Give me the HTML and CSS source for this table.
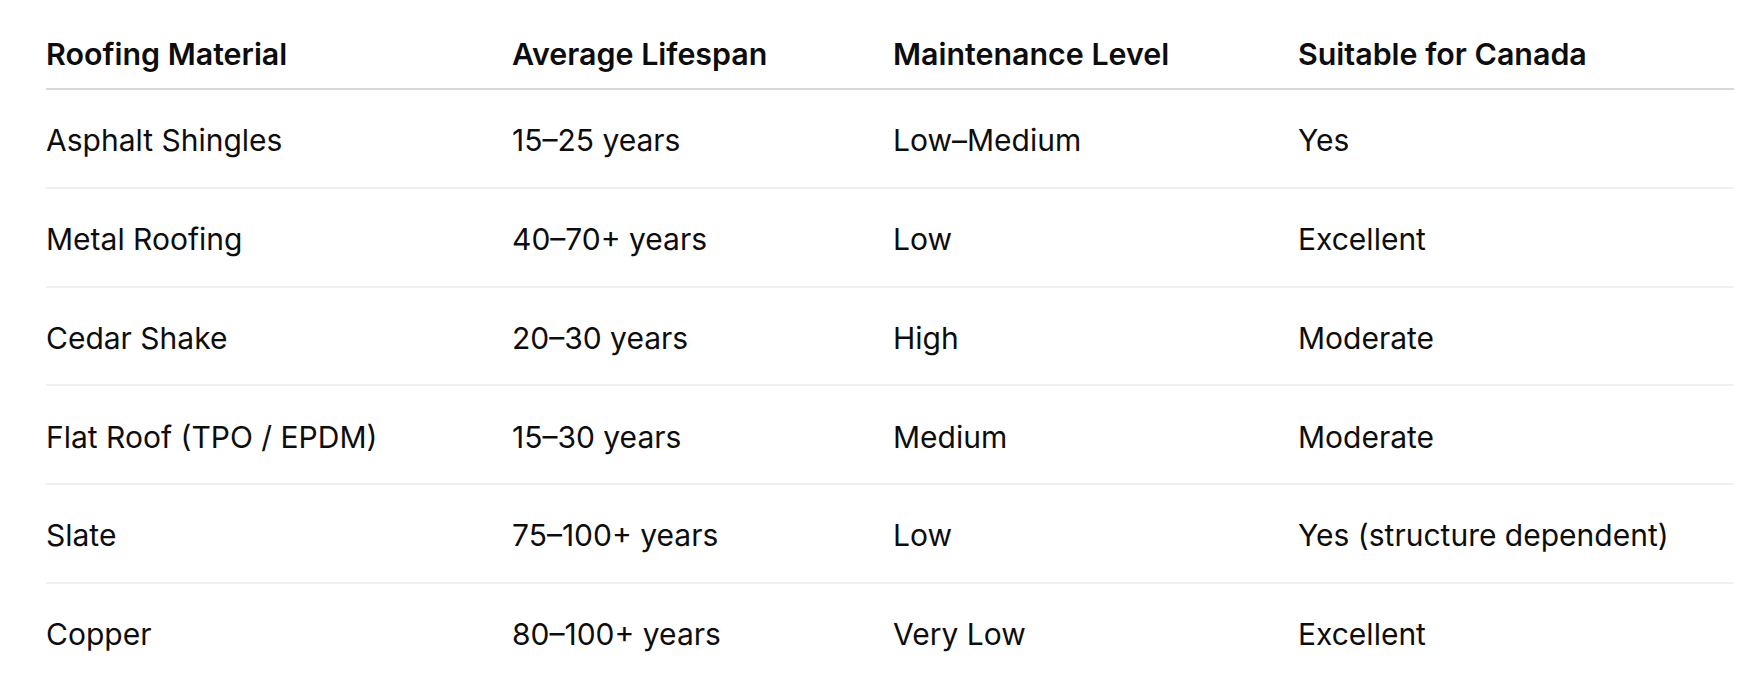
FILE: index.html
```html
<!DOCTYPE html>
<html lang="en">
<head>
<meta charset="utf-8">
<title>Roofing Comparison</title>
<link rel="stylesheet" href="styles.css">
</head>
<body>
<main class="page">
  <h2 class="section-title">Quick Comparison Snapshot</h2>
  <table class="compare">
    <colgroup>
      <col class="c1"><col class="c2"><col class="c3"><col class="c4">
    </colgroup>
    <thead>
      <tr>
        <th>Roofing Material</th>
        <th>Average Lifespan</th>
        <th>Maintenance Level</th>
        <th>Suitable for Canada</th>
      </tr>
    </thead>
    <tbody>
      <tr><td>Asphalt Shingles</td><td>15–25 years</td><td>Low–Medium</td><td>Yes</td></tr>
      <tr><td>Metal Roofing</td><td>40–70+ years</td><td>Low</td><td>Excellent</td></tr>
      <tr><td>Cedar Shake</td><td>20–30 years</td><td>High</td><td>Moderate</td></tr>
      <tr><td>Flat Roof (TPO / EPDM)</td><td>15–30 years</td><td>Medium</td><td>Moderate</td></tr>
      <tr><td>Slate</td><td>75–100+ years</td><td>Low</td><td>Yes (structure dependent)</td></tr>
      <tr><td>Copper</td><td>80–100+ years</td><td>Very Low</td><td>Excellent</td></tr>
    </tbody>
  </table>
</main>
</body>
</html>
```
FILE: styles.css
```css
html, body {
  margin: 0;
  padding: 0;
  background: #ffffff;
}

body {
  font-family: Inter, "Noto Sans", "Liberation Sans", sans-serif;
  color: #0d0d0d;
  overflow: hidden;
}

.page {
  padding-left: 46px;
  width: 1688px;
}

.section-title {
  font-size: 36px;
  line-height: 43px;
  font-weight: 700;
  margin: -42.5px 0 1.5px 0;
}

.compare {
  width: 1688px;
  border-collapse: collapse;
  table-layout: fixed;
  font-size: 30px;
  line-height: 42px;
}

.compare .c1 { width: 466px; }
.compare .c2 { width: 381px; }
.compare .c3 { width: 405px; }
.compare .c4 { width: auto; }

.compare th {
  text-align: left;
  font-weight: 600;
  font-size: 30.4px;
  padding: 31px 0 13px 0;
  border-bottom: 2px solid #d9d9d9;
}

.compare td {
  padding: 29.2px 0 25.6px 0;
  border-bottom: 2px solid #f0f0f0;
  font-weight: 400;
}

.compare tbody tr:last-child td {
  border-bottom: none;
}
```
